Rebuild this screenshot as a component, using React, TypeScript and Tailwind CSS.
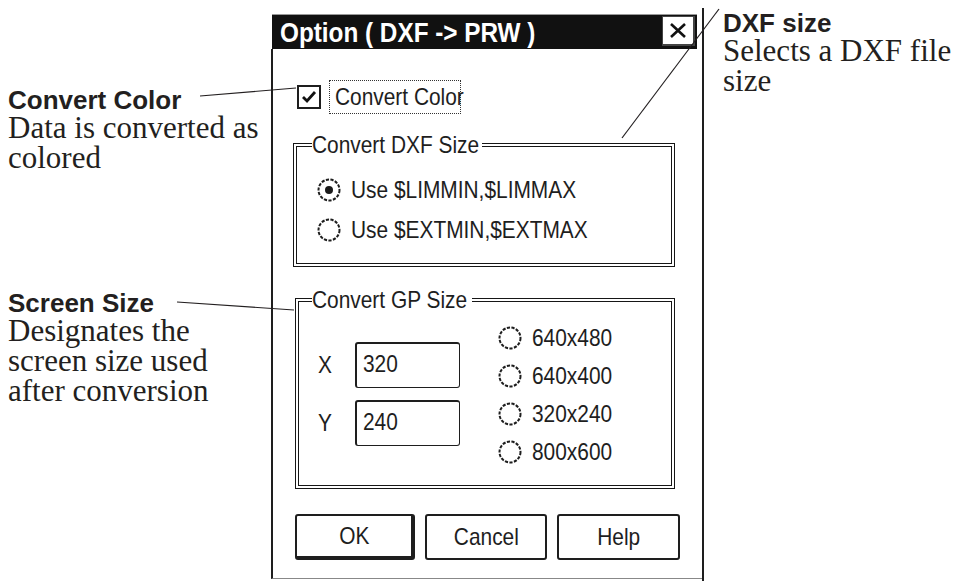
import React from "react";

// texte "MS Sans Serif" étiré : police normale compressée horizontalement
function Tx({ children, className = "" }: { children: React.ReactNode; className?: string }) {
  return (
    <span className={`inline-block whitespace-nowrap origin-left scale-x-[0.87] ${className}`}>
      {children}
    </span>
  );
}

function Radio({ on }: { on?: boolean }) {
  return (
    <svg width="26" height="26" viewBox="0 0 26 26" className="shrink-0">
      <circle
        cx="13"
        cy="13"
        r="10.5"
        fill="white"
        stroke="#1e1e1e"
        strokeWidth="2"
        strokeDasharray="3.2 1.4"
      />
      {on && <circle cx="13" cy="13" r="4" fill="#1a1a1a" />}
    </svg>
  );
}

function RadioRow({ label, on }: { label: string; on?: boolean }) {
  return (
    <div className="flex h-[28px] items-center gap-[9px]">
      <Radio on={on} />
      <Tx>{label}</Tx>
    </div>
  );
}

function Field({ label, value }: { label: string; value: string }) {
  return (
    <div className="flex items-center">
      <div className="w-[37px]">
        <Tx>{label}</Tx>
      </div>
      <div className="h-[46px] w-[105px] rounded-[3px] border-l-2 border-t-2 border-r border-b border-[#1e1e1e] bg-white pl-[6px] pt-[8px]">
        <Tx>{value}</Tx>
      </div>
    </div>
  );
}

function Btn({ label, main, w }: { label: string; main?: boolean; w: string }) {
  return (
    <div
      className={`flex h-[46px] items-center justify-center rounded-[3px] border-[#1e1e1e] bg-white ${w} ${
        main ? "border-l-2 border-t-2 border-r-4 border-b-4" : "border-2"
      }`}
    >
      <span className="inline-block origin-center scale-x-[0.87] whitespace-nowrap">{label}</span>
    </div>
  );
}

function Note({ title, lines }: { title: string; lines: string[] }) {
  return (
    <div>
      <div className="font-['Liberation_Sans',Arial,sans-serif] text-[26px] font-bold leading-[26px]">
        {title}
      </div>
      {lines.map((l) => (
        <div
          key={l}
          className="font-['Liberation_Serif','Times_New_Roman',serif] text-[31px] leading-[30px]"
        >
          {l}
        </div>
      ))}
    </div>
  );
}

export default function App() {
  return (
    <div className="relative flex h-[581px] w-[961px] overflow-hidden bg-white text-[#231f20]">
      {/* annotations gauche */}
      <aside className="w-[271px] shrink-0 pl-[8px]">
        <div className="mt-[87px]">
          <Note title="Convert Color" lines={["Data is converted as", "colored"]} />
        </div>
        <div className="mt-[117px]">
          <Note
            title="Screen Size"
            lines={["Designates the", "screen size used", "after conversion"]}
          />
        </div>
      </aside>

      {/* boîte de dialogue */}
      <div className="mt-[8px] w-[433px] shrink-0 border-r-2 border-[#1e1e1e] font-['Liberation_Sans',Arial,sans-serif] text-[24px] leading-[24px] text-[#1e1e1e]">
        <div className="ml-[1px] mt-[6px] flex h-[35px] w-[425px] items-start justify-between border-t border-[#999] bg-[#111]">
          <span className="ml-[8px] inline-block origin-left scale-x-[0.9] whitespace-nowrap pt-[3px] text-[27px] font-bold leading-[31px] text-white">
            Option ( DXF -&gt; PRW )
          </span>
          <div className="mr-[2px] mt-[1px] flex h-[30px] w-[33px] items-center justify-center border border-r-2 border-b-2 border-[#444] bg-white">
            <svg width="20" height="17" viewBox="0 0 20 17">
              <path d="M3 2 L17 15 M17 2 L3 15" stroke="#111" strokeWidth="2.6" />
            </svg>
          </div>
        </div>

        <div className="flex h-[530px] flex-col border-b border-l-2 border-[#1e1e1e] border-b-[#888]">
          <div className="ml-[24px] mt-[31px] flex h-[34px] items-center gap-[8px]">
            <div className="flex h-[24px] w-[24px] items-center justify-center border-2 border-[#1e1e1e] bg-white">
              <svg width="16" height="14" viewBox="0 0 16 14">
                <path d="M2 7 L6 11 L14 2" stroke="#111" strokeWidth="2.8" fill="none" />
              </svg>
            </div>
            <div className="flex h-[34px] w-[132px] items-center border border-dotted border-[#333] pl-[5px]">
              <Tx>Convert Color</Tx>
            </div>
          </div>

          <fieldset className="ml-[20px] mt-[19px] h-[134px] w-[382px] border-4 border-double border-[#161616]">
            <legend className="ml-[15px] h-[24px] w-[170px]">
              <Tx>Convert DXF Size</Tx>
            </legend>
            <div className="flex flex-col gap-[12px] pl-[19px] pt-[19px]">
              <RadioRow label="Use $LIMMIN,$LIMMAX" on />
              <RadioRow label="Use $EXTMIN,$EXTMAX" />
            </div>
          </fieldset>

          <fieldset className="ml-[22px] mt-[21px] h-[201px] w-[380px] border-4 border-double border-[#161616]">
            <legend className="ml-[13px] h-[24px] w-[160px]">
              <Tx>Convert GP Size</Tx>
            </legend>
            <div className="flex pl-[19px]">
              <div className="mt-[30px] flex flex-col gap-[12px]">
                <Field label="X" value="320" />
                <Field label="Y" value="240" />
              </div>
              <div className="ml-[37px] mt-[12px] flex flex-col gap-[10px]">
                <RadioRow label="640x480" />
                <RadioRow label="640x400" />
                <RadioRow label="320x240" />
                <RadioRow label="800x600" />
              </div>
            </div>
          </fieldset>

          <div className="ml-[22px] mt-[25px] flex gap-[10px]">
            <Btn label="OK" main w="w-[120px]" />
            <Btn label="Cancel" w="w-[122px]" />
            <Btn label="Help" w="w-[123px]" />
          </div>
        </div>
      </div>

      {/* annotation droite */}
      <aside className="pl-[19px] pt-[10px]">
        <Note title="DXF size" lines={["Selects a DXF file", "size"]} />
      </aside>

      {/* traits de renvoi */}
      <svg className="pointer-events-none absolute inset-0" width="961" height="581">
        <g stroke="#231f20" strokeWidth="1.2">
          <line x1="200" y1="96" x2="296" y2="88" />
          <line x1="719" y1="9" x2="622" y2="138" />
          <line x1="177" y1="302" x2="294" y2="310" />
        </g>
      </svg>
    </div>
  );
}
